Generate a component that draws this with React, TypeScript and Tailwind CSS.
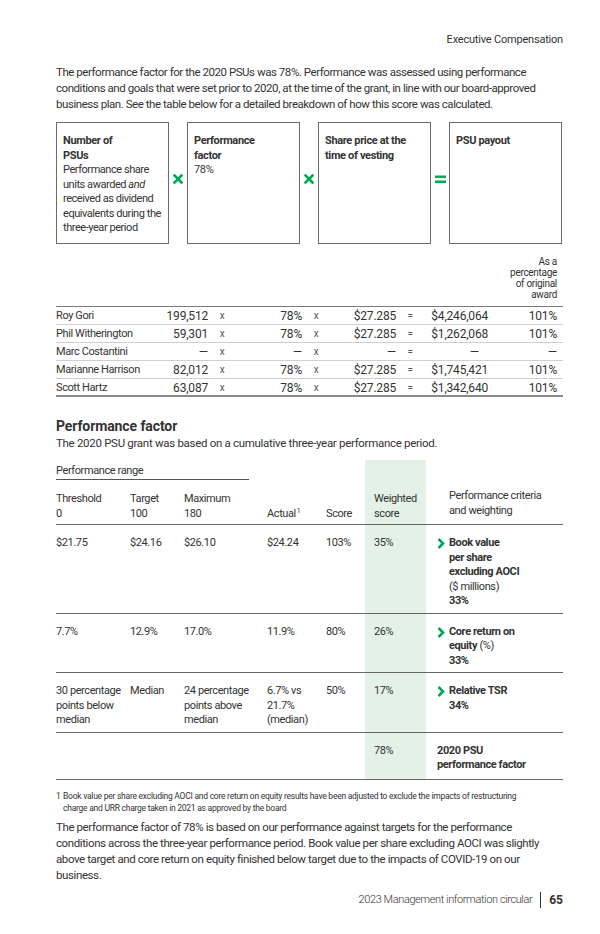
import React from "react";

const green = "#00a758";

const Times = () => (
  <svg width="10" height="10" viewBox="0 0 10 10">
    <path d="M1.5 1.5 L8.5 8.5 M8.5 1.5 L1.5 8.5" stroke={green} strokeWidth="2.6" strokeLinecap="square" />
  </svg>
);

const Equals = () => (
  <svg width="11" height="9" viewBox="0 0 11 9">
    <rect x="0" y="0.5" width="11" height="2.6" fill={green} />
    <rect x="0" y="5.5" width="11" height="2.6" fill={green} />
  </svg>
);

const Chevron = () => (
  <svg width="8" height="11" viewBox="0 0 8 11" className="shrink-0 mt-[2px]">
    <path d="M1.5 1 L6 5.5 L1.5 10" stroke={green} strokeWidth="2.6" fill="none" />
  </svg>
);

const payouts = [
  ["Roy Gori", "199,512", "78%", "$27.285", "$4,246,064", "101%"],
  ["Phil Witherington", "59,301", "78%", "$27.285", "$1,262,068", "101%"],
  ["Marc Costantini", "—", "—", "—", "—", "—"],
  ["Marianne Harrison", "82,012", "78%", "$27.285", "$1,745,421", "101%"],
  ["Scott Hartz", "63,087", "78%", "$27.285", "$1,342,640", "101%"],
];

const payoutCols = "grid grid-cols-[100px_52px_28px_66px_28px_66px_28px_64px_1fr]";
const perfCols = "grid grid-cols-[74px_54px_83px_59px_39px_61px_1fr]";

// paragraphs are given line by line so the breaks fall where the print has them
function Lines({ lines, className }: { lines: string[]; className?: string }) {
  return (
    <div className={className}>
      {lines.map((l) => (
        <div key={l} className="whitespace-nowrap">{l}</div>
      ))}
    </div>
  );
}

function Box({ title, children }: { title: React.ReactNode; children?: React.ReactNode }) {
  return (
    <div className="w-[113px] h-[122px] border border-[#6b6b6b] px-[6px] pt-[11px] text-[11px] leading-[14.5px] tracking-[-0.35px] whitespace-nowrap">
      <div className="font-bold">{title}</div>
      {children}
    </div>
  );
}

function Op({ children }: { children: React.ReactNode }) {
  return <div className="w-[18px] flex items-center justify-center pb-[8px]">{children}</div>;
}

export default function App() {
  return (
    <div className="bg-white w-[600px] h-[934px] text-[#333] font-['Roboto',sans-serif] tracking-[-0.4px]">
      <div className="ml-[56px] w-[507px]">
        <div className="pt-[32px] text-right text-[11px] leading-[16px] tracking-[-0.2px]">Executive Compensation</div>

        <Lines
          className="mt-[16px] text-[11.5px] leading-[16px] tracking-[-0.45px]"
          lines={[
            "The performance factor for the 2020 PSUs was 78%. Performance was assessed using performance",
            "conditions and goals that were set prior to 2020, at the time of the grant, in line with our board-approved",
            "business plan. See the table below for a detailed breakdown of how this score was calculated.",
          ]}
        />

        <div className="mt-[10px] flex">
          <Box title={<>Number of<br />PSUs</>}>
            <div className="tracking-[-0.45px]">
              Performance share<br />units awarded <i>and</i><br />received as dividend<br />equivalents during the<br />three-year period
            </div>
          </Box>
          <Op><Times /></Op>
          <Box title={<>Performance<br />factor</>}>
            <div>78%</div>
          </Box>
          <Op><Times /></Op>
          <Box title={<>Share price at the<br />time of vesting</>} />
          <Op><Equals /></Op>
          <Box title="PSU payout" />
        </div>

        <div className="mt-[12px] text-[11px]">
          <div className="flex justify-end pr-[6px] pb-[6px]">
            <div className="text-right text-[10px] leading-[11px] tracking-[-0.3px]">As a<br />percentage<br />of original<br />award</div>
          </div>
          <div className="border-t border-[#7a7a7a]" />
          {payouts.map((r, i) => (
            <div
              key={r[0]}
              className={`${payoutCols} h-[18px] items-center leading-[18px] ${i < payouts.length - 1 ? "border-b border-[#cfcfcf]" : "border-b-[2px] border-[#8a8a8a]"}`}
            >
              <div>{r[0]}</div>
              <div className="text-right text-[12px] tracking-[-0.2px]">{r[1]}</div>
              <div className="text-center text-[10px] text-[#555]">x</div>
              <div className="text-right text-[12px] tracking-[-0.2px]">{r[2]}</div>
              <div className="text-center text-[10px] text-[#555]">x</div>
              <div className="text-right text-[12px] tracking-[-0.2px]">{r[3]}</div>
              <div className="text-center text-[10px] text-[#555]">=</div>
              <div className={`text-right text-[12px] tracking-[-0.2px] ${r[4] === "—" ? "pr-[9px]" : ""}`}>{r[4]}</div>
              <div className="text-right text-[12px] tracking-[-0.2px] pr-[6px]">{r[5]}</div>
            </div>
          ))}
        </div>

        <h2 className="mt-[20px] text-[14px] leading-[18px] font-bold tracking-[-0.1px]">Performance factor</h2>
        <p className="text-[11.5px] leading-[16px] tracking-[-0.3px]">The 2020 PSU grant was based on a cumulative three-year performance period.</p>

        <div className="mt-[9px] text-[11px] leading-[14.5px]">
          <div className={`${perfCols}`}>
            <div className="col-span-3 border-b border-[#555] pt-[4px] pb-[1px] h-[20px] w-[193px]">Performance range</div>
            <div />
            <div />
            <div className="bg-[#e3f1e6]" />
            <div />
          </div>
          <div className={`${perfCols} items-end`}>
            <div className="pt-[12px] pb-[3px]">Threshold<br />0</div>
            <div className="pb-[3px]">Target<br />100</div>
            <div className="pb-[3px]">Maximum<br />180</div>
            <div className="pb-[3px]">Actual<sup className="text-[7px] ml-[1px]">1</sup></div>
            <div className="pb-[3px]">Score</div>
            <div className="bg-[#e3f1e6] h-full flex items-end pl-[9px] pb-[3px]">Weighted<br />score</div>
            <div className="pl-[23px] pb-[6px]">Performance criteria<br />and weighting</div>
          </div>

          <PerfRow
            cells={["$21.75", "$24.16", "$26.10", "$24.24", "103%", "35%"]}
            criteria={<><b>Book value<br />per share<br />excluding AOCI</b><br />($ millions)<br /><b>33%</b></>}
          />
          <PerfRow
            cells={["7.7%", "12.9%", "17.0%", "11.9%", "80%", "26%"]}
            criteria={<><b>Core return on<br />equity</b> (%)<br /><b>33%</b></>}
          />
          <PerfRow
            cells={[<>30 percentage<br />points below<br />median</>, "Median", <>24 percentage<br />points above<br />median</>, <>6.7% vs<br />21.7%<br />(median)</>, "50%", "17%"]}
            criteria={<><b>Relative TSR<br />34%</b></>}
          />
          <div className={`${perfCols} border-t-[1.5px] border-b-[1.5px] border-[#666]`}>
            <div className="col-span-5" />
            <div className="bg-[#e3f1e6] pl-[9px] pt-[11px] pb-[6px]">78%</div>
            <div className="pl-[11px] pt-[11px] pb-[6px] font-bold">2020 PSU<br />performance factor</div>
          </div>
        </div>

        <div className="mt-[10px] flex text-[8.5px] leading-[12px] tracking-[-0.25px]">
          <div className="w-[7px] shrink-0">1</div>
          <Lines
            lines={[
              "Book value per share excluding AOCI and core return on equity results have been adjusted to exclude the impacts of restructuring",
              "charge and URR charge taken in 2021 as approved by the board",
            ]}
          />
        </div>

        <Lines
          className="mt-[5px] text-[11.5px] leading-[16px] tracking-[-0.4px]"
          lines={[
            "The performance factor of 78% is based on our performance against targets for the performance",
            "conditions across the three-year performance period. Book value per share excluding AOCI was slightly",
            "above target and core return on equity finished below target due to the impacts of COVID-19 on our",
            "business.",
          ]}
        />

        <div className="mt-[9px] flex justify-end items-center text-[11px] leading-[16px] tracking-[-0.4px] font-light">
          <span>2023 Management information circular</span>
          <span className="mx-[8px] w-px h-[16px] bg-[#333]" />
          <span className="font-bold text-[12px] tracking-normal">65</span>
        </div>
      </div>
    </div>
  );
}

function PerfRow({ cells, criteria }: { cells: React.ReactNode[]; criteria: React.ReactNode }) {
  return (
    <div className={`${perfCols} border-t-[1.5px] border-[#666]`}>
      {cells.slice(0, 5).map((c, i) => (
        <div key={i} className="pt-[11px] pb-[4px]">{c}</div>
      ))}
      <div className="bg-[#e3f1e6] pl-[9px] pt-[11px] pb-[4px]">{cells[5]}</div>
      <div className="pl-[11px] pt-[11px] pb-[4px] flex gap-[4px]">
        <Chevron />
        <div>{criteria}</div>
      </div>
    </div>
  );
}
